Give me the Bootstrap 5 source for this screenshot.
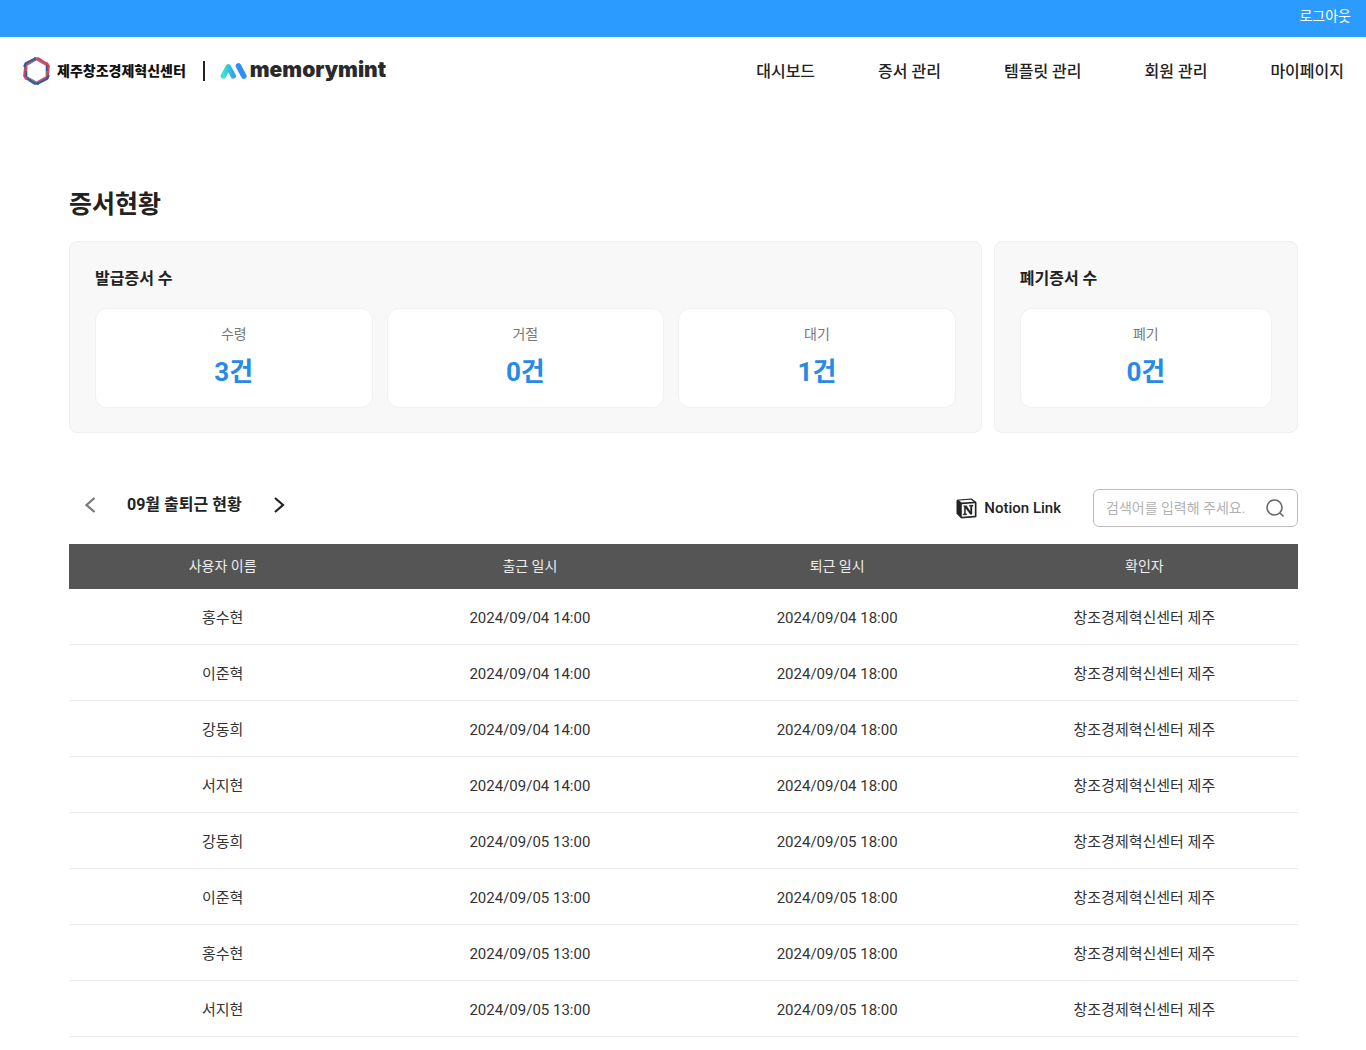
<!DOCTYPE html>
<html lang="ko">
<head>
<meta charset="utf-8">
<meta name="viewport" content="width=device-width, initial-scale=1">
<title>증서현황 - memorymint</title>
<link rel="stylesheet" href="https://cdn.jsdelivr.net/npm/bootstrap@5.3.0/dist/css/bootstrap.min.css">
<style>
  body { font-family: Roboto, "Noto Sans CJK KR", sans-serif; color: #222; background: #fff; }
  .topbar { background: #2b9bff; height: 37px; padding: 5px 15px 0; font-size: 14px; line-height: 22px; }
  .site-head { padding: 16px 22px; min-height: 68px; }
  .brand-center { font-size: 14px; font-weight: 900; color: #111; line-height: 36px; margin-left: 6px; }
  .brand-rule { width: 2px; height: 20px; background: #222; margin: 0 15px 0 17px; }
  .brand-mint { font-family: Inter, sans-serif; font-size: 21px; font-weight: 900; color: #2a2a2c; line-height: 34px; padding-bottom: 2px; margin-left: 2px; }
  .site-nav { gap: 63px; padding-top: 2px; font-size: 16px; line-height: 24px; font-weight: 500; }
  .site-nav .nav-link { color: #222; padding: 0; }
  .page-body { padding: 81px 68px 12px 69px; }
  .page-title { font-size: 25px; line-height: 38px; font-weight: 700; margin: 0 0 17px; }
  .panel-group { display: grid; grid-template-columns: 3fr 1fr; gap: 12px; }
  .panel { background: #f8f8f8; border: 1px solid #efefef; border-radius: 8px; padding: 24px 25px; }
  .panel-title { font-size: 16px; line-height: 26px; font-weight: 700; margin: 0 0 16px; }
  .stat { background: #fff; border: 1px solid #f1f1f1; border-radius: 12px; padding: 14px 0 16px; flex: 1 1 0; text-align: center; }
  .stat-list { gap: 14px; }
  .stat-name { font-size: 14px; line-height: 22px; color: #777; margin: 0; }
  .stat-num { font-size: 26px; line-height: 38px; font-weight: 700; color: #268ae6; margin: 8px 0 0; }
  .tools { margin-top: 56px; padding-bottom: 17px; }
  .month { gap: 30px; padding: 0 14px; margin-bottom: 6px; }
  .month h2 { font-size: 16px; line-height: 26px; font-weight: 700; margin: 0; }
  .month button { border: 0; background: none; padding: 0; width: 14px; height: 20px; line-height: 0; }
  .notion { font-size: 15px; line-height: 24px; font-weight: 500; color: #222; gap: 7px; margin-right: 32px; }
  .search { width: 205px; height: 38px; border: 1px solid #bbb; border-radius: 6px; padding: 0 12px; background: #fff; }
  .search input { border: 0; outline: 0; padding: 0; min-width: 0; font-size: 14px; line-height: 22px; color: #222; }
  .search input::placeholder { color: #b2b2b2; opacity: 1; }
  .search button { border: 0; background: none; padding: 0; line-height: 0; }
  .log { table-layout: fixed; text-align: center; margin: 0; width: 100%; }
  .log thead th { background: #555; color: #eee; font-size: 14px; line-height: 22px; font-weight: 400; padding: 11px 8px 12px; }
  .log tbody td { font-size: 15px; line-height: 24px; color: #333; padding: 17px 8px 14px; border-bottom: 1px solid #ececec; }
</style>
</head>
<body>
<div class="topbar d-flex justify-content-end"><a href="#" class="text-white text-decoration-none">로그아웃</a></div>
<header class="site-head d-flex justify-content-between align-items-center">
  <a href="#" class="d-flex align-items-center text-decoration-none">
    <svg width="29" height="30" viewBox="0 0 29 30" aria-hidden="true">
      <g fill="none" stroke-width="2.400" stroke-linejoin="round">
        <path d="M14.500 3.200 24.800 9v12l-10.300 5.800L4.200 21V9Z" stroke="#8f7396"/>
        <path d="M12 2.400h4.500L26 8.800" stroke="#d8455a"/>
        <path d="M24 6.500l2.700 3.500-1.200 11.500" stroke="#d8455a"/>
        <path d="M26.800 19l-1.600 3.700-10 5" stroke="#2f5b96"/>
        <path d="M17 27.600h-4.500L3 21.200" stroke="#2f5b96"/>
        <path d="M5 23.500 2.300 20 3.500 8.500" stroke="#d8455a"/>
        <path d="M2.200 11l1.600-3.700 10-5" stroke="#2f5b96"/>
        <path d="M24.800 9v6M4.200 21v-6" stroke="#2f5b96" stroke-width="1.600"/>
        <path d="M24 21.500l-6 3.400M5 8.500l5-3" stroke="#d8455a" stroke-width="1.400"/>
      </g>
    </svg>
    <span class="brand-center">제주창조경제혁신센터</span>
    <span class="brand-rule"></span>
    <svg width="28" height="18" viewBox="0 0 28 18" aria-hidden="true">
      <defs><linearGradient id="mint" x1="0" x2="1"><stop offset="0" stop-color="#35e6cc"/><stop offset="1" stop-color="#2fa6ee"/></linearGradient></defs>
      <path d="M3.300 14 8.300 4.800l5 9.200" fill="none" stroke="url(#mint)" stroke-width="5.400" stroke-linecap="round" stroke-linejoin="round"/>
      <path d="M18.500 4l5.300 10" stroke="#2f8ff7" stroke-width="5.600" stroke-linecap="round"/>
    </svg>
    <span class="brand-mint">memorymint</span>
  </a>
  <nav class="site-nav nav">
    <a class="nav-link" href="#">대시보드</a>
    <a class="nav-link" href="#">증서 관리</a>
    <a class="nav-link" href="#">템플릿 관리</a>
    <a class="nav-link" href="#">회원 관리</a>
    <a class="nav-link" href="#">마이페이지</a>
  </nav>
</header>
<main class="page-body">
  <h1 class="page-title">증서현황</h1>
  <div class="panel-group">
    <section class="panel">
      <h2 class="panel-title">발급증서 수</h2>
      <div class="stat-list d-flex">
        <div class="stat"><p class="stat-name">수령</p><p class="stat-num">3건</p></div>
        <div class="stat"><p class="stat-name">거절</p><p class="stat-num">0건</p></div>
        <div class="stat"><p class="stat-name">대기</p><p class="stat-num">1건</p></div>
      </div>
    </section>
    <section class="panel">
      <h2 class="panel-title">폐기증서 수</h2>
      <div class="stat-list d-flex">
        <div class="stat"><p class="stat-name">폐기</p><p class="stat-num">0건</p></div>
      </div>
    </section>
  </div>
  <div class="tools d-flex justify-content-between align-items-center">
    <div class="month d-flex align-items-center">
      <button type="button" aria-label="이전 달"><svg width="14" height="20" viewBox="0 0 14 20" fill="none" stroke="#777" stroke-width="2.200"><path d="M11.500 3 3.500 10l8 7"/></svg></button>
      <h2>09월 출퇴근 현황</h2>
      <button type="button" aria-label="다음 달"><svg width="14" height="20" viewBox="0 0 14 20" fill="none" stroke="#222" stroke-width="2.200"><path d="M3 3l8 7-8 7"/></svg></button>
    </div>
    <div class="d-flex align-items-center">
      <a href="#" class="notion d-flex align-items-center text-decoration-none">
        <svg width="21" height="21" viewBox="0 0 21 21" aria-hidden="true">
          <path d="M1 2.200 15.500 1 20 4.200V18.800L5.300 20 1 15.500Z" fill="#222" stroke="#222" stroke-linejoin="round"/>
          <path d="M3 2.600 15 1.700 17.800 3.700 5.500 4.600Z" fill="#fff"/><path d="M5.800 6.200 18.800 5.300V17.700L5.800 18.700Z" fill="#fff"/>
          <path d="M7.500 7.800h3l4 6V8.500l-1.200-.3V7.300l3.700-.2v.9l-1 .4v7.800l-1.700.1L9.500 10v5.600l1.300.3v.9l-3.500.2v-.9l1-.4V8.900Z" fill="#222" stroke="#222" stroke-width=".400"/>
        </svg>
        <span>Notion Link</span>
      </a>
      <form class="search d-flex align-items-center" role="search">
        <input type="text" class="flex-fill" placeholder="검색어를 입력해 주세요." aria-label="검색어">
        <button type="button" aria-label="검색"><svg width="20" height="20" viewBox="0 0 20 20" fill="none" stroke="#666" stroke-width="1.600"><circle cx="9.500" cy="9.500" r="7.500"/><path d="M15 15l3.500 3.500"/></svg></button>
      </form>
    </div>
  </div>
  <table class="log">
    <thead><tr><th scope="col">사용자 이름</th><th scope="col">출근 일시</th><th scope="col">퇴근 일시</th><th scope="col">확인자</th></tr></thead>
    <tbody>
      <tr><td>홍수현</td><td>2024/09/04 14:00</td><td>2024/09/04 18:00</td><td>창조경제혁신센터 제주</td></tr>
      <tr><td>이준혁</td><td>2024/09/04 14:00</td><td>2024/09/04 18:00</td><td>창조경제혁신센터 제주</td></tr>
      <tr><td>강동희</td><td>2024/09/04 14:00</td><td>2024/09/04 18:00</td><td>창조경제혁신센터 제주</td></tr>
      <tr><td>서지현</td><td>2024/09/04 14:00</td><td>2024/09/04 18:00</td><td>창조경제혁신센터 제주</td></tr>
      <tr><td>강동희</td><td>2024/09/05 13:00</td><td>2024/09/05 18:00</td><td>창조경제혁신센터 제주</td></tr>
      <tr><td>이준혁</td><td>2024/09/05 13:00</td><td>2024/09/05 18:00</td><td>창조경제혁신센터 제주</td></tr>
      <tr><td>홍수현</td><td>2024/09/05 13:00</td><td>2024/09/05 18:00</td><td>창조경제혁신센터 제주</td></tr>
      <tr><td>서지현</td><td>2024/09/05 13:00</td><td>2024/09/05 18:00</td><td>창조경제혁신센터 제주</td></tr>
    </tbody>
  </table>
</main>
<script src="https://cdn.jsdelivr.net/npm/bootstrap@5.3.0/dist/js/bootstrap.bundle.min.js"></script>
</body>
</html>
